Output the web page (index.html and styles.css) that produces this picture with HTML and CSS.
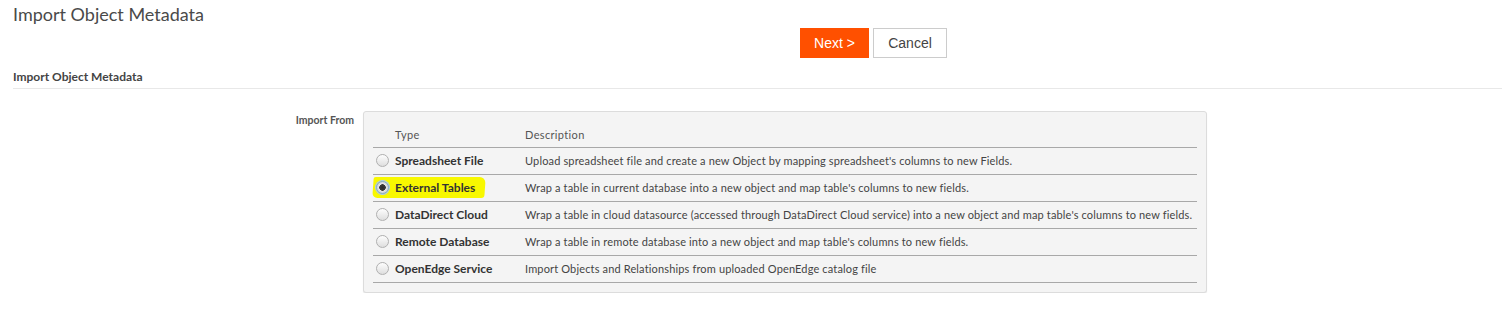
FILE: index.html
```html
<!DOCTYPE html>
<html lang="en">
<head>
	<meta charset="UTF-8">
	<title>Import Object Metadata</title>
	<link rel="stylesheet" href="styles.css">
</head>
<body>
	<header class="page-head">
		<h1>Import Object Metadata</h1>
		<nav class="actions">
			<button class="btn-next">Next &gt;</button>
			<button class="btn-cancel">Cancel</button>
		</nav>
	</header>
	<section class="section">
		<h2 class="section-title">Import Object Metadata</h2>
		<div class="field-row">
			<label class="field-label">Import From</label>
			<div class="panel">
				<table class="import-table">
					<thead>
						<tr><th class="col-type">Type</th><th>Description</th></tr>
					</thead>
					<tbody>
						<tr>
							<td class="col-type"><span class="radio"></span><b>Spreadsheet File</b></td>
							<td>Upload spreadsheet file and create a new Object by mapping spreadsheet's columns to new Fields.</td>
						</tr>
						<tr>
							<td class="col-type"><span class="marker"><span class="radio checked"></span><b>External Tables</b></span></td>
							<td>Wrap a table in current database into a new object and map table's columns to new fields.</td>
						</tr>
						<tr>
							<td class="col-type"><span class="radio"></span><b>DataDirect Cloud</b></td>
							<td>Wrap a table in cloud datasource (accessed through DataDirect Cloud service) into a new object and map table's columns to new fields.</td>
						</tr>
						<tr>
							<td class="col-type"><span class="radio"></span><b>Remote Database</b></td>
							<td>Wrap a table in remote database into a new object and map table's columns to new fields.</td>
						</tr>
						<tr>
							<td class="col-type"><span class="radio"></span><b>OpenEdge Service</b></td>
							<td>Import Objects and Relationships from uploaded OpenEdge catalog file</td>
						</tr>
					</tbody>
				</table>
			</div>
		</div>
	</section>
</body>
</html>
```

FILE: styles.css
```css
* {margin:0px;padding:0px;box-sizing:border-box;}
body {background-color:#fff;font-family:Lato, "Open Sans", sans-serif;color:#333;}
.page-head {padding:4px 13px 0px 13px;}
.page-head h1 {font-size:18px;font-weight:normal;color:#4a4a4a;line-height:20px;}
.actions {display:flex;flex-flow:row nowrap;gap:4px;margin:4px 0px 0px 787px;}
.actions button {font-family:"Liberation Sans", Arial, sans-serif;font-size:14px;height:30px;padding:0px 13px;cursor:pointer;}
.btn-next {background-color:#ff5000;color:#fff;border:1px solid #ff5000;width:69px;}
.btn-cancel {background-color:#fff;color:#444;border:1px solid #ccc;width:74px;}

.section {margin:12px 0px 0px 13px;}
.section-title {font-size:12px;font-weight:bold;color:#444;line-height:14px;padding-bottom:4px;border-bottom:1px solid #e8e8e8;}
.field-row {display:flex;flex-flow:row nowrap;margin-top:22px;}
.field-label {width:350px;text-align:right;padding-right:9px;font-size:10.5px;font-weight:bold;color:#555;line-height:17px;margin-top:1px;}
.panel {width:844px;background-color:#f4f4f4;border:1px solid #dcdcdc;border-radius:3px;padding:9px 9px 9px 9px;box-shadow:0px 1px 1px #e8e8e8;}
.import-table {width:100%;border-collapse:collapse;font-size:11px;letter-spacing:0.15px;}
.import-table th {text-align:left;font-weight:normal;color:#555;height:26px;padding-top:1px;letter-spacing:0.35px;border-bottom:1px solid #a8a8a8;}
.import-table td {height:27px;border-bottom:1px solid #a8a8a8;color:#444;white-space:nowrap;}
.import-table .col-type {width:152px;padding-left:22px;}
.import-table td.col-type {padding-left:3px;}
.import-table td.col-type b {color:#333;font-size:12px;letter-spacing:0px;}
.radio {display:inline-block;width:13px;height:13px;border-radius:50%;border:1px solid #b0b0b0;background:linear-gradient(#fdfdfd, #dedede);vertical-align:-2px;margin-right:6px;}
.radio.checked {border-color:#7aa7e0;box-shadow:0px 0px 0px 1px #a9c8f0;background:radial-gradient(circle, #2b2b2b 0px, #3a3a3a 3px, #e8e8e8 3.5px, #cfcfcf 6px);}
.marker {display:inline-block;background-color:#f8f800;padding:3px 10px 3px 3px;margin-left:-3px;border-radius:2px 6px 3px 5px;transform:skewX(-4deg);}
.marker > * {transform:skewX(4deg);display:inline-block;}
```
